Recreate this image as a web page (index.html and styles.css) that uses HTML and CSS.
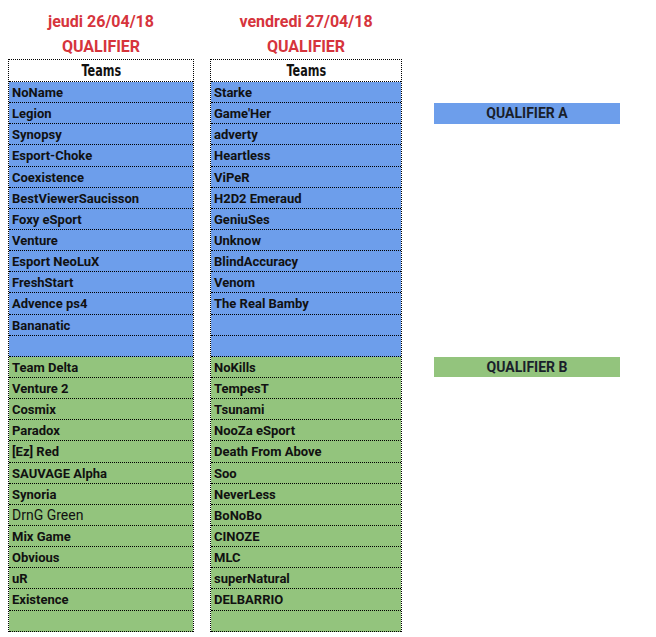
FILE: index.html
```html
<!DOCTYPE html>
<html>
<head>
<meta charset="utf-8">
<link rel="stylesheet" href="styles.css">
</head>
<body>
<div class="page">
  <div class="day day-1">
    <div class="title">jeudi 26/04/18</div>
    <div class="title">QUALIFIER</div>
    <div class="table">
      <div class="row head"><span class="teams">Teams</span></div>
      <div class="row blue">NoName</div>
      <div class="row blue">Legion</div>
      <div class="row blue">Synopsy</div>
      <div class="row blue">Esport-Choke</div>
      <div class="row blue">Coexistence</div>
      <div class="row blue">BestViewerSaucisson</div>
      <div class="row blue">Foxy eSport</div>
      <div class="row blue">Venture</div>
      <div class="row blue">Esport NeoLuX</div>
      <div class="row blue">FreshStart</div>
      <div class="row blue">Advence ps4</div>
      <div class="row blue">Bananatic</div>
      <div class="row blue"></div>
      <div class="row green">Team Delta</div>
      <div class="row green">Venture 2</div>
      <div class="row green">Cosmix</div>
      <div class="row green">Paradox</div>
      <div class="row green">[Ez] Red</div>
      <div class="row green">SAUVAGE Alpha</div>
      <div class="row green">Synoria</div>
      <div class="row green regular">DrnG Green</div>
      <div class="row green">Mix Game</div>
      <div class="row green">Obvious</div>
      <div class="row green">uR</div>
      <div class="row green">Existence</div>
      <div class="row green last"></div>
    </div>
  </div>
  <div class="day day-2">
    <div class="title">vendredi 27/04/18</div>
    <div class="title">QUALIFIER</div>
    <div class="table">
      <div class="row head"><span class="teams">Teams</span></div>
      <div class="row blue">Starke</div>
      <div class="row blue">Game'Her</div>
      <div class="row blue">adverty</div>
      <div class="row blue">Heartless</div>
      <div class="row blue">ViPeR</div>
      <div class="row blue">H2D2 Emeraud</div>
      <div class="row blue">GeniuSes</div>
      <div class="row blue">Unknow</div>
      <div class="row blue">BlindAccuracy</div>
      <div class="row blue">Venom</div>
      <div class="row blue">The Real Bamby</div>
      <div class="row blue"></div>
      <div class="row blue"></div>
      <div class="row green">NoKills</div>
      <div class="row green">TempesT</div>
      <div class="row green">Tsunami</div>
      <div class="row green">NooZa eSport</div>
      <div class="row green">Death From Above</div>
      <div class="row green">Soo</div>
      <div class="row green">NeverLess</div>
      <div class="row green">BoNoBo</div>
      <div class="row green">CINOZE</div>
      <div class="row green">MLC</div>
      <div class="row green">superNatural</div>
      <div class="row green">DELBARRIO</div>
      <div class="row green last"></div>
    </div>
  </div>
  <div class="legend">
    <div class="label label-a">QUALIFIER A</div>
    <div class="label label-b">QUALIFIER B</div>
  </div>
</div>
</body>
</html>
```

FILE: styles.css
```css
html, body {
  margin: 0;
  padding: 0;
  background: #ffffff;
}

.page {
  display: flex;
  align-items: flex-start;
  padding: 9px 0 0 8px;
  font-family: Roboto, "Liberation Sans", sans-serif;
  color: #111111;
}

.day-1 {
  width: 186px;
}

.day-2 {
  width: 192px;
  margin-left: 16px;
}

.title {
  height: 25px;
  line-height: 25px;
  text-align: center;
  font-size: 16px;
  font-weight: 700;
  color: #d6343c;
}

.table {
  border: 1px dotted #000000;
  border-bottom: none;
}

.row {
  height: 20.15px;
  line-height: 21px;
  border-bottom: 1px dotted #000000;
  padding-left: 3px;
  font-size: 13px;
  font-weight: 700;
  white-space: nowrap;
  overflow: hidden;
}

.row.head {
  height: 21px;
  line-height: 22px;
  padding-left: 0;
  text-align: center;
  background: #ffffff;
}

.teams {
  display: inline-block;
  font-family: "DejaVu Sans Condensed", "DejaVu Sans", sans-serif;
  font-weight: 700;
  font-size: 16px;
  transform: scaleX(0.78);
  color: #111111;
}

.blue {
  background: #6d9eeb;
}

.green {
  background: #93c47d;
}

.regular {
  font-weight: 400;
  font-size: 14px;
}

.legend {
  width: 186px;
  margin-left: 32px;
  padding-top: 94px;
  display: flex;
  flex-direction: column;
}

.label {
  height: 21px;
  line-height: 21px;
  text-align: center;
  font-size: 14px;
  font-weight: 700;
  color: #1a1f2b;
}

.label-a {
  background: #6d9eeb;
}

.label-b {
  background: #93c47d;
  margin-top: 233px;
  height: 20px;
  line-height: 20px;
}
```
